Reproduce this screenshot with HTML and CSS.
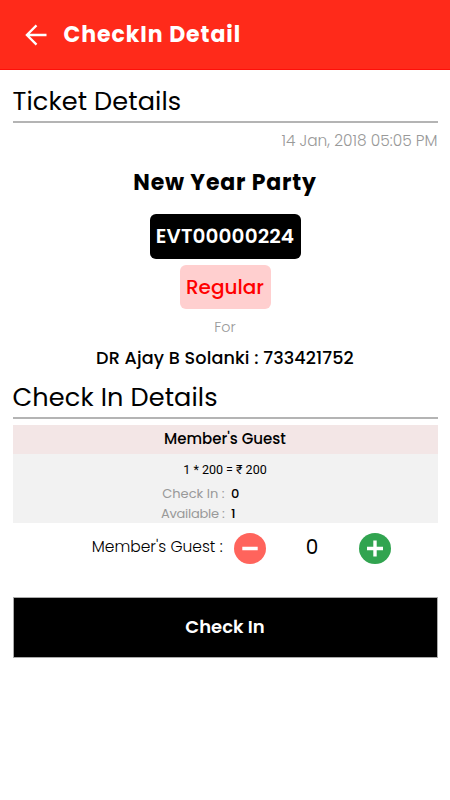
FILE: index.html
```
<!DOCTYPE html>
<html lang="en">
<head>
<meta charset="utf-8">
<title>CheckIn Detail</title>
<link rel="stylesheet" href="styles.css">
</head>
<body>
<header class="bar">
  <svg class="back" viewBox="0 0 24 24" width="24" height="24"><path d="M22.5 12H3M12.5 2.4L2.9 12l9.6 9.6" fill="none" stroke="#fff" stroke-width="2.3"/></svg>
  <h1 class="title">CheckIn Detail</h1>
</header>
<main class="page">
  <h2 class="heading ticket">Ticket Details</h2>
  <p class="date">14 Jan, 2018 05:05 PM</p>
  <p class="event">New Year Party</p>
  <p class="code">EVT00000224</p>
  <p class="type">Regular</p>
  <p class="for">For</p>
  <p class="member">DR Ajay B Solanki : 733421752</p>
  <h2 class="heading checkin">Check In Details</h2>
  <section class="card">
    <h3 class="card-title">Member's Guest</h3>
    <p class="price">1 * 200 = ₹ 200</p>
    <dl class="stats">
      <dt>Check In :</dt><dd>0</dd>
      <dt class="available">Available :</dt><dd>1</dd>
    </dl>
  </section>
  <div class="counter">
    <p class="label">Member's Guest :</p>
    <button class="round minus" aria-label="Remove"><svg viewBox="0 0 32 32" width="32" height="32"><path d="M8.3 15.5h15.4" stroke="#fff" stroke-width="3.4"/></svg></button>
    <p class="count">0</p>
    <button class="round plus" aria-label="Add"><svg viewBox="0 0 32 32" width="32" height="32"><path d="M8 15.5h16M16 7.5v16" stroke="#fff" stroke-width="3.4"/></svg></button>
  </div>
  <button class="submit">Check In</button>
</main>
</body>
</html>
```
FILE: styles.css
```
* { box-sizing: border-box; margin: 0; padding: 0; }
body { background: #fff; color: #000; font-family: Poppins, Inter, "Liberation Sans", sans-serif; white-space: nowrap; }
button { border: 0; font-family: inherit; }
.bar { height: 70px; padding: 0 24px; display: flex; align-items: center; gap: 15.5px; background: #ff2a1a; border-bottom: 1px solid #ff0f0a; }
.back { display: block; }
.title { font-size: 22px; line-height: 30px; font-weight: 700; letter-spacing: 0.95px; color: #fff; }
.page { padding: 0 12.5px; display: flex; flex-direction: column; text-align: center; }
.heading { font-size: 25.6px; font-weight: 400; letter-spacing: 0.1px; text-align: left; border-bottom: 2px solid #b4b4b4; }
.ticket { height: 53px; padding-top: 11px; line-height: 40px; }
.date { height: 35px; line-height: 35px; font-size: 15.4px; font-weight: 300; color: #999; text-align: right; }
.event { height: 56px; line-height: 50px; font-size: 22px; font-weight: 700; letter-spacing: 0.8px; }
.code { align-self: center; width: 151px; height: 45px; line-height: 45px; border-radius: 6px; background: #000; color: #fff; font-size: 20px; font-weight: 600; letter-spacing: 0.1px; }
.type { align-self: center; width: 91px; height: 44px; margin-top: 6px; line-height: 44px; border-radius: 6px; background: #ffcfcf; color: #f00; font-size: 20px; font-weight: 500; }
.for { height: 34px; line-height: 36px; font-size: 14.3px; font-weight: 300; color: #999; }
.member { height: 30px; line-height: 30px; font-size: 17.6px; font-weight: 500; letter-spacing: 0.1px; }
.checkin { height: 46px; line-height: 49px; }
.card { margin-top: 6px; height: 98px; background: #f2f2f2; }
.card-title { height: 29px; line-height: 28px; background: #f3e6e6; font-size: 15px; font-weight: 500; }
.price { height: 30px; line-height: 31px; font-family: Roboto, sans-serif; font-size: 12.5px; }
.stats { display: grid; grid-template-columns: 212px 1fr; grid-auto-rows: 19.5px; column-gap: 6.5px; line-height: 19px; font-size: 13px; text-align: left; }
.stats dt { text-align: right; color: #999; }
.stats .available { letter-spacing: -0.25px; }
.stats dd { font-weight: 500; }
.counter { display: flex; align-items: center; height: 50px; }
.label { width: 210px; text-align: right; font-size: 15.5px; line-height: 26px; padding-bottom: 3px; font-weight: 300; }
.round { width: 32px; height: 31px; border-radius: 50%; overflow: hidden; }
.round svg { display: block; }
.minus { margin-left: 11px; background: #ff645c; }
.plus { background: #31a450; }
.count { width: 93px; padding-bottom: 2px; font-size: 20px; }
.submit { margin-top: 24px; height: 61px; padding-bottom: 3px; background: #000; border: 1px solid #aaa; color: #fff; font-size: 18px; font-weight: 600; }
```
